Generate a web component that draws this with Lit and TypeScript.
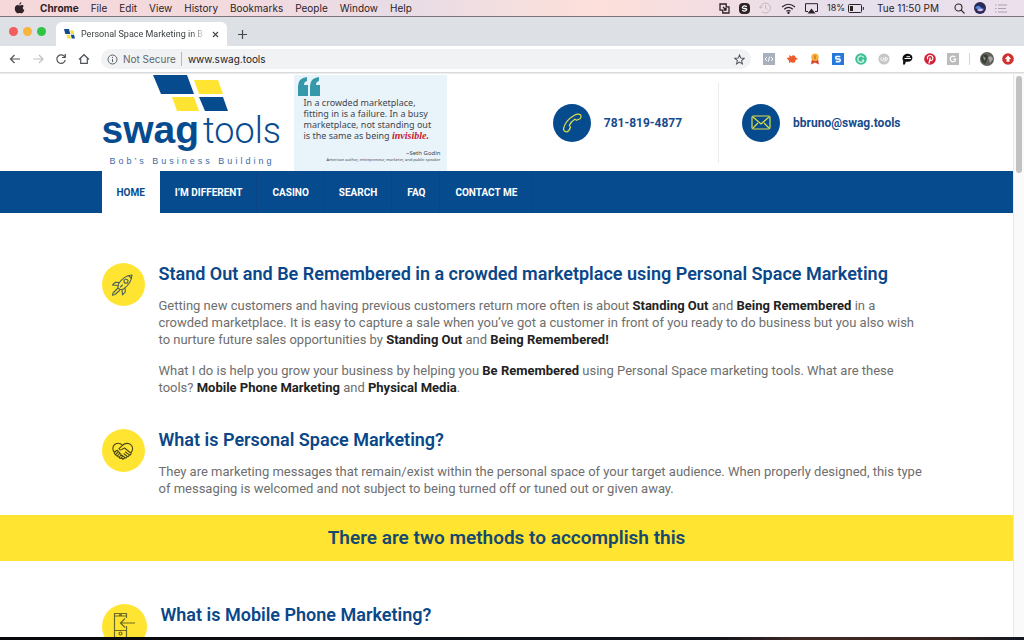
import { LitElement, html, css, svg } from "lit";
import { customElement } from "lit/decorators.js";

const rocket = svg`<g fill="none" stroke="#4c5f5c" stroke-width="1.1" stroke-linejoin="round" stroke-linecap="round">
  <path d="M21 2C15 2.500 10.500 6 7.500 11L6.800 14.500L9 16.700L12.500 16C17.500 12.500 20.500 8 21 2Z"/>
  <path d="M8.500 9.500L4.500 9.200L1.500 12L7 12.500M14 15L14.300 18.800L11.500 21.800L11 16.500"/>
  <circle cx="15" cy="8.200" r="2"/><path d="M18 3L20.500 5.500M6.500 15.500L2 20L1.500 22.300L4 21.500L8.500 17.500M9.500 14L11.500 12"/></g>`;

const handshake = svg`<g fill="none" stroke="#4b4715" stroke-width="1.100" stroke-linejoin="round" stroke-linecap="round">
  <path d="M3.500 13.500C1 11 1.500 7 4 5.300C6.500 3.800 9.500 4.300 11.500 6.300C14 3.800 18 3.800 20 5.800C22.300 8 22 11.500 20 13.500"/>
  <path d="M11.500 6.300L8 9.600C8.600 11.400 10.600 11.200 11.500 10L13.500 9L20 14.200C20.500 15.500 19 16.400 18 15.600L14.500 13M18 15.600C18.500 17 17 18 16 17.200L13 14.800M16 17.200C16.300 18.600 14.800 19.400 13.800 18.500L11.500 16.600M13.800 18.500L12 20.300L10.500 19"/>
  <path d="M3.500 13.500L5.500 11.500C6.600 11 7.400 12 7 13L4.800 15.300C4 15.800 2.900 14.600 3.500 13.500M7 13C8.300 12.600 9 13.600 8.500 14.600L6.600 16.700C5.700 17.200 4.500 16.300 4.800 15.300M8.500 14.600C9.800 14.300 10.400 15.300 9.900 16.200L8.400 18C7.500 18.500 6.300 17.600 6.600 16.700M9.900 16.200C11.200 16.200 11.600 17 11.200 17.900L10.200 19.200C9.400 19.800 8.200 19 8.400 18"/></g>`;

const phoneIn = svg`<g fill="none" stroke="#6b6a26" stroke-width="1.200">
  <path d="M13.500 6V1.500H1.500V29H13.500V14M1.500 4H13.500M1.500 18.500H13.500M6 2.800H9"/><circle cx="7.500" cy="21.500" r="1.500"/>
  <path d="M22 11H7.500M12 6.500L7.500 11L12 15.500"/></g>`;

const menus = ["File", "Edit", "View", "History", "Bookmarks", "People", "Window", "Help"];
const links = ["I’M DIFFERENT", "CASINO", "SEARCH", "FAQ", "CONTACT ME"];

const extensions = [
  { name: "Source viewer", art: svg`<rect width="12" height="12" fill="#a9b0bd"/><path d="M4 4L2 6L4 8M8 4L10 6L8 8M6.700 3.500L5.300 8.500" fill="none" stroke="#fff"/>` },
  { name: "Bird", art: svg`<path d="M0.500 5L3.500 4.500L3 2L5.500 3.500C7 1.200 9.500 2.500 9.500 4.500L12 6L9.500 7C9.500 10 6.500 10.500 4.500 9L3 10.500L3.200 8Z" fill="#ee5a2c"/>` },
  { name: "Award", art: svg`<path d="M3 6H9L10 11.500L6 9.500L2 11.500Z" fill="#d9412e"/><circle cx="6" cy="4.200" r="3.700" fill="#f6b13a"/><path d="M6 2.200V6.200" stroke="#d5682a" stroke-width="1.200"/>` },
  { name: "S tools", art: svg`<rect width="12" height="12" fill="#2679dc"/><path d="M8.300 3.500H4.600Q3.800 3.500 3.800 4.700T4.600 6H7.400Q8.200 6 8.200 7.300T7.400 8.600H3.700" fill="none" stroke="#fff" stroke-width="1.600"/>` },
  { name: "Checker", art: svg`<circle cx="6" cy="6" r="5.800" fill="#3fbf95"/><path d="M8.800 4.600A3.200 3.200 0 1 0 9 7.200M9 7.200H6.800" fill="none" stroke="#d9f5ea" stroke-width="1.200"/>` },
  { name: "Up", art: svg`<circle cx="6" cy="6" r="5.600" fill="#c6c6c6"/><path d="M3 4.500V6.500Q3 7.500 4.200 7.500T5.500 6.500V4.500M7 9V4.700H8.400Q9.400 4.700 9.400 5.900T8.400 7.100H7" fill="none" stroke="#fff" stroke-width=".9"/>` },
  { name: "Chat", art: svg`<path d="M2 11.500L2.200 8C.2 4 3 .8 7 .8C13 1 12.800 8.700 6.800 8.800L4.800 8.700L4 11.500Z" fill="#111"/><path d="M3.500 5.500H10M5.500 3.700H9" stroke="#fff" stroke-width="1"/>` },
  { name: "Pin", art: svg`<circle cx="6" cy="6" r="5.800" fill="#d32036"/><path d="M4.900 10.500L6.300 4.500M3.700 6.200C2.600 3.500 4.500 2.500 6.200 2.500C9 2.500 9.300 5 8.500 6.500C7.700 8 6.300 7.800 5.800 6.900" fill="none" stroke="#fff" stroke-width="1.200"/>` },
  { name: "G", art: svg`<rect width="12" height="12" fill="#bcbcbc"/><path d="M8.300 4.200A2.800 2.800 0 1 0 8.600 7V6.200H6.300" fill="none" stroke="#fff" stroke-width="1.200"/>` },
];

@customElement("app-root")
export class AppRoot extends LitElement {
  static styles = css`
    :host { display: flex; flex-direction: column; height: 100vh; overflow: hidden; background: #fff; color: #6e6e6e; font-family: Roboto, "Liberation Sans", sans-serif; }
    * { box-sizing: border-box; }
    svg { display: block; flex: none; }
    button { border: 0; padding: 0; margin: 0; background: none; font: inherit; color: inherit; white-space: nowrap; }
    a { color: inherit; text-decoration: none; }
    h1, h2, p, ul { margin: 0; padding: 0; }
    .menubar { flex: none; height: 17px; display: flex; align-items: center; padding: 0 16px 0 14px; border-bottom: 1px solid #7c737b; background: linear-gradient(90deg, #f6d8da 0%, #f2dade 24%, #e7dce6 39%, #fde0da 58%, #f3dde3 70%, #e5dfec 82%, #ece0ec 100%); font: 10px/16px Inter, sans-serif; color: #2c2226; }
    .menus { display: flex; gap: 12px; margin-left: 15px; }
    .app { font-weight: 700; }
    .status { display: flex; align-items: center; margin-left: auto; gap: 9px; }
    .power { display: flex; align-items: center; gap: 3px; font-size: 9px; }
    .clock { margin: 0 6px 0 4px; }
    .tabs { flex: none; height: 29px; background: #dde0e5; display: flex; align-items: flex-end; padding-left: 9px; }
    .lights { display: flex; gap: 5px; height: 29px; align-items: center; margin-right: 10px; }
    .light { width: 9px; height: 9px; border-radius: 50%; }
    .red { background: #f35d5c; } .amber { background: #f6b53f; } .green { background: #2fc544; }
    .tab { width: 171px; height: 24px; background: #fff; border-radius: 6px 6px 0 0; display: flex; align-items: center; padding: 0 8px; gap: 6px; font: 9px/12px Roboto, sans-serif; color: #3c4043; }
    .title { flex: 1; min-width: 0; text-align: left; mask-image: linear-gradient(90deg, #000 88%, transparent); }
    .plus { margin: 0 0 7px 11px; }
    .toolbar { flex: none; height: 27px; display: flex; align-items: center; padding: 0 10px 0 9px; border-bottom: 1px solid #d9dadb; background: #fff; }
    .moves { display: flex; gap: 11px; margin-right: 11px; }
    .omnibox { flex: 1; min-width: 0; height: 20px; border-radius: 10px; background: #f0f2f4; display: flex; align-items: center; padding: 0 6px; font: 10px/14px Inter, sans-serif; color: #63676b; }
    .secure { margin: 0 5px; white-space: nowrap; }
    .address { flex: 1; min-width: 0; border: 0; border-left: 1px solid #b5b8bb; background: none; outline: 0; padding: 0 0 0 6px; font: inherit; color: #202124; }
    .extensions { display: flex; align-items: center; gap: 11px; margin-left: 12px; }
    .rule { width: 1px; height: 12px; background: #d4d5d7; margin: 0 -1px; }
    .avatar { display: flex; align-items: center; gap: 8px; }
    .view { flex: 1; min-height: 0; display: flex; overflow: hidden; border-top: 1px solid #ececec; }
    .page { flex: 1; min-width: 0; }
    .scrollbar { flex: none; width: 11px; background: #fafafa; border-left: 1px solid #e8e8e8; padding: 2px; }
    .thumb { width: 6px; height: 97px; border-radius: 3px; background: #c1c1c1; }
    .wrap { max-width: 810px; margin: 0 auto; }
    .header { display: flex; height: 97px; }
    .logo { width: 180px; margin-right: 12px; color: #074b8f; }
    .mark { margin: 1px 0 0 51px; }
    .wordmark { display: flex; align-items: baseline; gap: 4px; height: 44px; font: 700 39px/36px "Liberation Sans", sans-serif; white-space: nowrap; }
    .thin { font: 300 36px/36px Roboto, sans-serif; }
    .tagline { margin-left: 8px; font: 9px/10px "Liberation Sans", sans-serif; letter-spacing: 3px; white-space: nowrap; color: #3c6ca5; }
    .quote { width: 153px; margin-top: 1px; background: #e9f3fa; padding: 2px 6px 0 4px; font: 9px/11px "Noto Sans", sans-serif; color: #3f464d; white-space: nowrap; }
    .saying { margin: 1px 0 0 6px; }
    .red-word { font: italic 700 10px/10px "Liberation Serif", serif; color: #c8202f; }
    .by { margin-top: 9px; text-align: right; font-size: 6px; line-height: 7px; }
    .who { text-align: right; font-size: 4px; line-height: 6px; }
    .contacts { display: flex; align-items: center; margin-left: auto; padding-right: 11px; color: #174a8b; font-size: 12px; font-weight: 700; }
    .contact { display: flex; align-items: center; gap: 13px; height: 80px; }
    .contact + .contact { border-left: 1px solid #ececec; margin-left: 36px; padding-left: 23px; }
    .disc { width: 38px; height: 38px; border-radius: 50%; background: #074b8f; display: grid; place-items: center; }
    .nav { background: #074b8f; }
    .items { display: flex; list-style: none; height: 42px; font-size: 10px; font-weight: 700; color: #fff; }
    .item { display: flex; align-items: center; padding: 0 14px 0 15px; border-right: 1px solid #0b4485; }
    .current { background: #fff; color: #074b8f; border-color: #fff; }
    .block { display: grid; grid-template-columns: auto 1fr; column-gap: 14px; align-items: start; padding-bottom: 34px; }
    .first { padding-top: 50px; padding-bottom: 33px; }
    .second { padding-bottom: 18px; }
    .copy { margin-right: -15px; }
    .badge { width: 43px; height: 43px; border-radius: 50%; background: #ffe532; display: grid; place-items: center; }
    .large { width: 45px; height: 45px; }
    .head { font-size: 18px; line-height: 22px; font-weight: 600; color: #0a4789; }
    .para { font-size: 13px; line-height: 17px; margin-top: 14px; }
    .head + .para { margin-top: 12px; }
    b { color: #222; font-weight: 700; }
    .banner { background: #ffe532; height: 46px; line-height: 46px; text-align: center; font-size: 19px; font-weight: 600; color: #17496f; }
    .third { padding-top: 43px; }
    .dock { flex: none; height: 3px; background: linear-gradient(90deg, #06070b 0%, #10141b 70%, #402a25 78%, #3b2520 92%, #0f1722 100%); }
  `;

  render() {
    return html`
      <div class="menubar">
        <svg width="11" height="12" viewBox="0 0 11 12"><path fill="#302327" d="M7.300 0.300C7.400 1.500 6.400 2.700 5.300 2.700C5.200 1.500 6.200 0.500 7.300 0.300ZM9.800 4C8.300 5 8.500 7.300 10.300 8C9.800 9.600 8.700 11.300 7.700 11.300C6.900 11.300 6.600 10.900 5.700 10.900S4.500 11.300 3.800 11.300C2.300 11.300 0.800 8.700 0.800 6.500C0.800 4.400 2.200 3.100 3.600 3.100C4.500 3.100 5.100 3.600 5.800 3.600C6.400 3.600 7 3.100 8 3.100C8.700 3.100 9.400 3.400 9.800 4Z"/></svg>
        <div class="menus"><button class="app">Chrome</button>${menus.map((m) => html`<button>${m}</button>`)}</div>
        <div class="status">
          <svg width="11" height="11" viewBox="0 0 11 11" fill="none" stroke="#2c2226" stroke-width="1.300"><path d="M3.500 7.200H1V1H7.200V3.500M6.500 3.800H10V10H3.800V6.500M4 4L7 7M7 4.800V7H4.800"/></svg>
          <svg width="11" height="11" viewBox="0 0 11 11"><rect width="11" height="11" rx="4" fill="#2c2226"/><path d="M7.800 3.600Q5.500 2 3.800 3.600T5.500 5.500T7.200 7.400T3.200 7.300" fill="none" stroke="#fff" stroke-width="1.300"/></svg>
          <svg width="13" height="12" viewBox="0 0 13 12" fill="none" stroke="#c4b5bd"><path d="M1.500 6A5 5 0 1 1 3 9.600M0 4.500L1.500 6.200L3.300 4.800M6.500 3V6.200L8.500 7.500"/></svg>
          <svg width="15" height="11" viewBox="0 0 15 11" fill="none" stroke="#2c2226" stroke-width="1.200"><path d="M1 4Q7.500-1.500 14 4M3.200 6.200Q7.500 2.700 11.800 6.200M5.400 8.300Q7.500 6.700 9.600 8.300"/><circle cx="7.500" cy="9.800" r=".6" fill="#2c2226"/></svg>
          <svg width="13" height="11" viewBox="0 0 13 11"><path d="M3 8.500H.5V.7H12.500V8.500H10" fill="none" stroke="#2c2226"/><path d="M6.500 5.500L10.500 10.500H2.500Z" fill="#2c2226"/></svg>
          <span class="power">18% <svg width="16" height="9" viewBox="0 0 16 9"><rect x=".5" y=".5" width="13" height="8" rx="1" fill="none" stroke="#2c2226"/><rect x="2" y="2" width="3" height="5" fill="#2c2226"/><path d="M15.300 3V6" stroke="#2c2226"/></svg></span>
          <span class="clock">Tue 11:50 PM</span>
          <svg width="11" height="11" viewBox="0 0 11 11" fill="none" stroke="#2c2226" stroke-width="1.100"><circle cx="4.500" cy="4.500" r="3.500"/><path d="M7.200 7.200L10.500 10.500"/></svg>
          <svg width="12" height="12" viewBox="0 0 12 12"><circle cx="6" cy="6" r="6" fill="#292a55"/><path d="M1 6Q4 2 6.500 5T11 5.500Q9 9 6 8T1 6Z" fill="#5088e0"/><path d="M3 8Q6 5.500 9.500 8Q6 10.500 3 8Z" fill="#d9bce9"/></svg>
          <svg width="13" height="9" viewBox="0 0 13 9" stroke="#aaa0b2"><path d="M0 1H1.500M3 1H12M0 4.500H1.500M3 4.500H11M0 8H1.500M3 8H12"/></svg>
        </div>
      </div>
      <div class="tabs">
        <div class="lights"><span class="light red"></span><span class="light amber"></span><span class="light green"></span></div>
        <div class="tab">
          <svg width="11" height="10" viewBox="0 0 11 10"><path d="M0 0H5L6.300 5H1.300Z" fill="#164a8c"/><path d="M6 1.500H9.500L10.200 5H7ZM2.500 5.800H6L7 9.500H3.500Z" fill="#f3df3e"/><path d="M6.800 5.800H10L11 9.500H7.800Z" fill="#164a8c"/></svg>
          <button class="title">Personal Space Marketing in B</button>
          <button aria-label="Close tab"><svg width="7" height="7" viewBox="0 0 7 7" stroke="#44484c" stroke-width="1.100"><path d="M1 1L6 6M6 1L1 6"/></svg></button>
        </div>
        <button class="plus" aria-label="New tab"><svg width="9" height="9" viewBox="0 0 9 9" stroke="#44484c" stroke-width="1.200"><path d="M4.500 0V9M0 4.500H9"/></svg></button>
      </div>
      <div class="toolbar">
        <div class="moves">
          <button aria-label="Back"><svg width="12" height="12" viewBox="0 0 12 12" fill="none" stroke="#505458" stroke-width="1.200"><path d="M11 6H1.500M5.500 2L1.500 6L5.500 10"/></svg></button>
          <button aria-label="Forward"><svg width="12" height="12" viewBox="0 0 12 12" fill="none" stroke="#bdbfc1" stroke-width="1.200"><path d="M1.500 6H11M7 2L11 6L7 10"/></svg></button>
          <button aria-label="Reload"><svg width="12" height="12" viewBox="0 0 12 12" fill="none" stroke="#505458" stroke-width="1.200"><path d="M10 4.200A4.300 4.300 0 1 0 10.300 7.200M10.300 1V4.500H7"/></svg></button>
          <button aria-label="Home"><svg width="12" height="12" viewBox="0 0 12 12" fill="none" stroke="#505458" stroke-width="1.200"><path d="M1 6.500L6 1.700L11 6.500M2.700 5.500V10.400H9.300V5.500"/></svg></button>
        </div>
        <div class="omnibox">
          <svg width="11" height="11" viewBox="0 0 11 11" fill="none" stroke="#5f6367"><circle cx="5.500" cy="5.500" r="4.500"/><path d="M5.500 5V8M5.500 2.900V4"/></svg>
          <span class="secure">Not Secure</span>
          <input class="address" aria-label="Address" value="www.swag.tools">
          <button aria-label="Bookmark"><svg width="11" height="11" viewBox="0 0 12 12" fill="none" stroke="#505458" stroke-width="1.100"><path d="M6 1L7.400 4.500L11.200 4.700L8.300 7.100L9.200 10.800L6 8.800L2.800 10.800L3.700 7.100L.8 4.700L4.600 4.500Z"/></svg></button>
        </div>
        <div class="extensions">
          ${extensions.map((e) => html`<button aria-label=${e.name}><svg width="12" height="12" viewBox="0 0 12 12">${e.art}</svg></button>`)}
          <span class="rule"></span>
          <div class="avatar">
            <button aria-label="Profile"><svg width="14" height="14" viewBox="0 0 14 14"><circle cx="7" cy="7" r="7" fill="#625f5b"/><path d="M1 5Q6 0 8 5L5 12Q1 10 1 5Z" fill="#363a34"/><path d="M8 5Q12 3 13 7L10 11Z" fill="#a6a6a2"/><path d="M3 4L6 6L4 9Z" fill="#8c9a72"/></svg></button>
            <button aria-label="Update"><svg width="12" height="12" viewBox="0 0 12 12"><circle cx="6" cy="6" r="5.800" fill="#d0312d"/><path d="M6 2.500L9.200 6H7.500V8.800H4.500V6H2.800Z" fill="#fff"/></svg></button>
          </div>
        </div>
      </div>
      <div class="view">
        <main class="page">
          <header class="wrap header">
            <div class="logo">
              <svg class="mark" width="76" height="37" viewBox="0 0 76 37"><path d="M0 0H34L41 19H8ZM46 22H70L75 36H52Z" fill="#074b8f"/><path d="M41 5H65L70 19H46ZM19 22H41L46 36H24Z" fill="#ffe532"/></svg>
              <div class="wordmark">swag<span class="thin">tools</span></div>
              <div class="tagline">Bob’s Business Building</div>
            </div>
            <div class="quote">
              <svg width="22" height="19" viewBox="0 0 22 19"><path fill="#3599aa" d="M9 0V4Q6 4.500 6 8H10V19H0V9Q0 1 9 0ZM21 0V4Q18 4.500 18 8H22V19H12V9Q12 1 21 0Z"/></svg>
              <div class="saying">In a crowded marketplace,<br>fitting in is a failure. In a busy<br>marketplace, not standing out<br>is the same as being <span class="red-word">invisible.</span></div>
              <div class="by">~Seth Godin</div>
              <div class="who">American author, entrepreneur, marketer, and public speaker</div>
            </div>
            <div class="contacts">
              <a class="contact" href="tel:7818194877"><span class="disc"><svg width="20" height="20" viewBox="0 0 20 20" fill="none" stroke="#dede4a" stroke-width="1.200" stroke-linejoin="round"><path d="M12 2.500Q16 .3 18.500 1.800Q19.800 4 18 5.800L14.500 7.300L12.800 6.200Q9 8.500 7.300 12.500L8.500 14Q7.500 18 4.500 19Q1.500 18.500 1.500 15.500Q3.500 7.500 12 2.500Z"/></svg></span>781-819-4877</a>
              <a class="contact" href="mailto:bbruno@swag.tools"><span class="disc"><svg width="20" height="15" viewBox="0 0 20 15" fill="none" stroke="#dede4a" stroke-width="1.200"><rect x="1" y="1" width="18" height="13" rx="1.500"/><path d="M2 2L10 9L18 2M2 13L7 8M18 13L13 8"/></svg></span>bbruno@swag.tools</a>
            </div>
          </header>
          <nav class="nav"><ul class="wrap items">
            <li class="item current"><a href="#">HOME</a></li>
            ${links.map((l) => html`<li class="item"><a href="#">${l}</a></li>`)}
          </ul></nav>
          <section class="wrap block first">
            <span class="badge"><svg width="24" height="24" viewBox="0 0 24 24">${rocket}</svg></span>
            <div class="copy">
              <h1 class="head">Stand Out and Be Remembered in a crowded marketplace using Personal Space Marketing</h1>
              <p class="para">Getting new customers and having previous customers return more often is about <b>Standing Out</b> and <b>Being Remembered</b> in a crowded marketplace. It is easy to capture a sale when you’ve got a customer in front of you ready to do business but you also wish to nurture future sales opportunities by <b>Standing Out</b> and <b>Being Remembered!</b></p>
              <p class="para">What I do is help you grow your business by helping you <b>Be Remembered</b> using Personal Space marketing tools. What are these tools? <b>Mobile Phone Marketing</b> and <b>Physical Media</b>.</p>
            </div>
          </section>
          <section class="wrap block second">
            <span class="badge"><svg width="24" height="24" viewBox="0 0 24 24">${handshake}</svg></span>
            <div class="copy">
              <h2 class="head">What is Personal Space Marketing?</h2>
              <p class="para">They are marketing messages that remain/exist within the personal space of your target audience. When properly designed, this type of messaging is welcomed and not subject to being turned off or tuned out or given away.</p>
            </div>
          </section>
          <h2 class="banner">There are two methods to accomplish this</h2>
          <section class="wrap block third">
            <span class="badge large"><svg width="22" height="30" viewBox="0 0 22 30">${phoneIn}</svg></span>
            <h2 class="head">What is Mobile Phone Marketing?</h2>
          </section>
        </main>
        <div class="scrollbar"><div class="thumb"></div></div>
      </div>
      <div class="dock"></div>
    `;
  }
}
